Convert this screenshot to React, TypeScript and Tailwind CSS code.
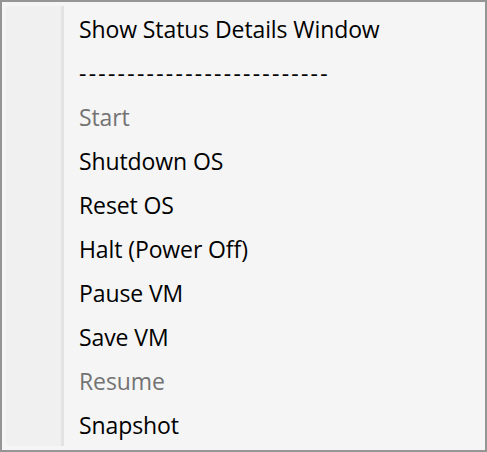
const items: { label: string; disabled?: boolean; dashes?: boolean }[] = [
  { label: 'Show Status Details Window' },
  { label: '--------------------------', dashes: true },
  { label: 'Start', disabled: true },
  { label: 'Shutdown OS' },
  { label: 'Reset OS' },
  { label: 'Halt (Power Off)' },
  { label: 'Pause VM' },
  { label: 'Save VM' },
  { label: 'Resume', disabled: true },
  { label: 'Snapshot' },
];

export default function App() {
  return (
    <div
      className="w-[487px] h-[452px] border-2 border-[#959595] bg-[#f5f5f5] p-[4px] overflow-hidden"
      style={{ fontFamily: '"Open Sans", "Noto Sans", sans-serif' }}
    >
      <div className="flex h-full">
        {/* Icon gutter */}
        <div className="w-[55px] shrink-0 bg-[#f0f0f0] rounded-l-[4px]" />
        <div className="w-[3px] shrink-0 bg-[#e3e3e3]" />

        {/* Menu items */}
        <div className="flex-1 pt-[1px]">
          {items.map((item, i) => (
            <div
              key={i}
              className={`h-[44px] flex items-center pl-[15px] text-[23px] leading-none ${
                item.disabled ? 'text-[#737373]' : 'text-black'
              } ${item.dashes ? 'tracking-[2.25px]' : 'tracking-[-0.1px]'}`}
            >
              {item.label}
            </div>
          ))}
        </div>
      </div>
    </div>
  );
}
